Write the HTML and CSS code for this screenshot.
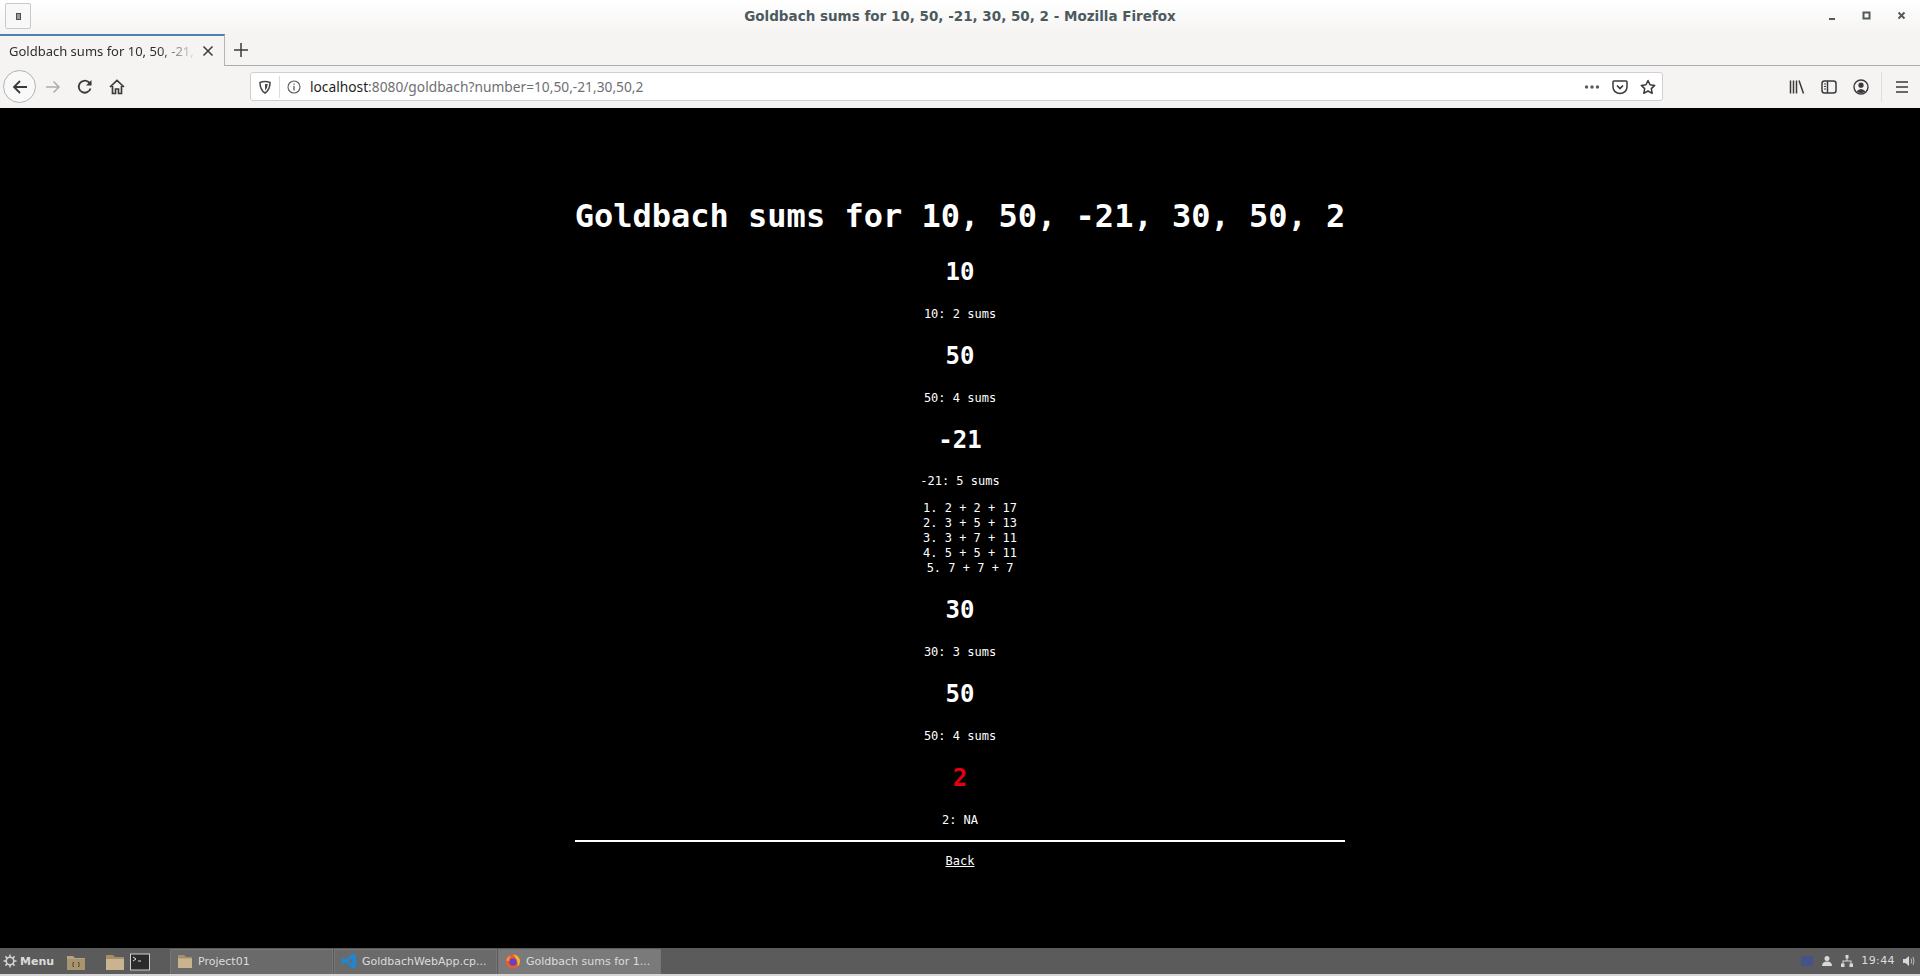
FILE: index.html
```html
<!DOCTYPE html>
<html lang="en">
  <head>
    <meta charset="UTF-8" />
    <title>Goldbach sums for 10, 50, -21, 30, 50, 2</title>
    <link rel="stylesheet" href="styles.css">
  </head>
  <body>
    <header class="titlebar">
      <div class="wm-menu"><span class="wm-menu-dot"></span></div>
      <div class="wm-title">Goldbach sums for 10, 50, -21, 30, 50, 2 - Mozilla Firefox</div>
      <div class="wm-controls">
        <svg width="12" height="12" viewBox="0 0 12 12"><rect x="3" y="8" width="6" height="2" fill="#555b5c"/></svg>
        <svg width="12" height="12" viewBox="0 0 12 12"><rect x="2.500" y="2.500" width="6" height="6" fill="none" stroke="#555b5c" stroke-width="2"/></svg>
        <svg width="12" height="12" viewBox="0 0 12 12"><path d="M2.500 2.500l6 6M8.500 2.500l-6 6" stroke="#555b5c" stroke-width="2"/></svg>
      </div>
    </header>

    <div class="tabstrip">
      <div class="tab">
        <span class="tab-label">Goldbach sums for 10, 50, -21,</span>
        <svg class="tab-close" width="12" height="12" viewBox="0 0 12 12"><path d="M1.500 1.500l9 9M10.500 1.500l-9 9" stroke="#3a3a3c" stroke-width="1.500"/></svg>
      </div>
      <svg class="tab-new" width="16" height="16" viewBox="0 0 16 16"><path d="M8 1v14M1 8h14" stroke="#3a3a3c" stroke-width="1.500"/></svg>
    </div>

    <nav class="toolbar">
      <div class="nav-btns">
        <span class="back-btn">
          <svg width="18" height="18" viewBox="0 0 18 18"><path d="M16 9H3M9 3L3 9l6 6" fill="none" stroke="#3a3a3c" stroke-width="1.800"/></svg>
        </span>
        <svg class="ico-forward" width="16" height="16" viewBox="0 0 16 16"><path d="M1 8h13M8.500 2.500L14 8l-5.500 5.500" fill="none" stroke="#adadad" stroke-width="1.500"/></svg>
        <svg class="ico-reload" width="16" height="16" viewBox="0 0 16 16"><path d="M13.500 9.500A6 6 0 1 1 11.500 3L14 5" fill="none" stroke="#3a3a3c" stroke-width="1.800"/><path d="M14.500 1v5.500H9z" fill="#3a3a3c"/></svg>
        <svg class="ico-home" width="16" height="16" viewBox="0 0 16 16"><path d="M1 8l7-6.500L15 8M3.500 7v7.500h3V10h3v4.500h3V7" fill="none" stroke="#3a3a3c" stroke-width="1.700"/></svg>
      </div>
      <div class="urlbar">
        <svg class="ico-shield" width="14" height="14" viewBox="0 0 14 14"><path d="M2 2.500Q7 .5 12 2.500 12 10 7 13 2 10 2 2.500z" fill="none" stroke="#4a4a4c" stroke-width="1.600"/><path d="M7 4v6.500Q9.500 8.500 9.800 4z" fill="#4a4a4c"/></svg>
        <span class="url-sep"></span>
        <svg class="ico-info" width="14" height="14" viewBox="0 0 14 14"><circle cx="7" cy="7" r="6" fill="none" stroke="#5b5b5f" stroke-width="1.100"/><path d="M7 6v4.500M7 3.500v1.200" stroke="#5b5b5f" stroke-width="1.300"/></svg>
        <span class="url-text">localhost<span class="url-dim">:8080/goldbach?number=10,50,-21,30,50,2</span></span>
        <span class="url-actions">
          <svg width="16" height="6" viewBox="0 0 16 6"><circle cx="2.500" cy="3" r="1.700" fill="#5b5b5f"/><circle cx="8" cy="3" r="1.700" fill="#5b5b5f"/><circle cx="13.500" cy="3" r="1.700" fill="#5b5b5f"/></svg>
          <svg width="16" height="16" viewBox="0 0 16 16"><path d="M2 2h12a1 1 0 0 1 1 1v5a7 6.500 0 0 1-14 0V3a1 1 0 0 1 1-1z" fill="none" stroke="#3a3a3c" stroke-width="1.500"/><path d="M5 6.500L8 9.500l3-3" fill="none" stroke="#3a3a3c" stroke-width="1.700"/></svg>
          <svg width="16" height="16" viewBox="0 0 16 16"><path d="M8 1.500l2 4.300 4.700.6-3.400 3.200.9 4.700L8 12l-4.200 2.300.9-4.700L1.300 6.400 6 5.800z" fill="none" stroke="#3a3a3c" stroke-width="1.500" stroke-linejoin="round"/></svg>
        </span>
      </div>
      <div class="tools">
        <svg width="16" height="16" viewBox="0 0 16 16"><path d="M1.500 1.500v13M4.500 1.500v13M7.500 1.500v13M10 1.500l4.500 13" fill="none" stroke="#3a3a3c" stroke-width="1.500"/></svg>
        <svg width="16" height="16" viewBox="0 0 16 16"><rect x="1" y="2" width="14" height="12" rx="2.500" fill="none" stroke="#3a3a3c" stroke-width="1.500"/><path d="M6.500 2v12" stroke="#3a3a3c" stroke-width="1.500"/><path d="M3 5h2M3 7.500h2M3 10h2" stroke="#3a3a3c"/></svg>
        <svg width="16" height="16" viewBox="0 0 16 16"><circle cx="8" cy="8" r="7" fill="none" stroke="#3a3a3c" stroke-width="1.400"/><circle cx="8" cy="6.200" r="2.600" fill="#3a3a3c"/><path d="M3.500 12.500Q8 7.500 12.500 12.500 8 15.500 3.500 12.500z" fill="#3a3a3c"/></svg>
        <span class="tool-sep"></span>
        <svg width="16" height="16" viewBox="0 0 16 16"><path d="M2 3h12M2 8h12M2 13h12" stroke="#3a3a3c" stroke-width="1.500"/></svg>
      </div>
    </nav>

    <main class="page">
      <div class="report">
        <h1>Goldbach sums for 10, 50, -21, 30, 50, 2</h1>
        <h2>10</h2>
        <p>10: 2 sums</p>
        <h2>50</h2>
        <p>50: 4 sums</p>
        <h2 class="tight">-21</h2>
        <p>-21: 5 sums</p>
        <ol>
          <li>2 + 2 + 17</li>
          <li>3 + 5 + 13</li>
          <li>3 + 7 + 11</li>
          <li>5 + 5 + 11</li>
          <li>7 + 7 + 7</li>
        </ol>
        <h2>30</h2>
        <p>30: 3 sums</p>
        <h2>50</h2>
        <p>50: 4 sums</p>
        <h2 class="err">2</h2>
        <p>2: NA</p>
        <hr />
        <a class="back" href="#">Back</a>
      </div>
    </main>

    <footer class="taskbar">
      <div class="start">
        <svg width="14" height="14" viewBox="0 0 14 14"><circle cx="7" cy="7" r="3.800" fill="none" stroke="#d4d4d4" stroke-width="1.600"/><path d="M7 .5v3M7 10.500v3M.5 7h3M10.500 7h3M2.400 2.400l2.100 2.100M9.500 9.500l2.100 2.100M2.400 11.600l2.100-2.100M9.500 4.500l2.100-2.100" stroke="#d4d4d4" stroke-width="1.500"/></svg>
        <span>Menu</span>
      </div>
      <div class="launchers">
        <svg width="20" height="18" viewBox="0 0 20 18"><path d="M1 3h6l2 2h10v12H1z" fill="#b5a27f"/><path d="M1 6h18v11H1z" fill="#a8946f"/><path d="M8 9.500h-1v4h1M12 9.500h1v4h-1" fill="none" stroke="#4f4634"/></svg>
        <svg class="ml" width="20" height="18" viewBox="0 0 20 18"><path d="M1 2h7l2 2h9v13H1z" fill="#a48f6a"/><path d="M1 6h18v11H1z" fill="#c9b48f"/></svg>
        <svg width="20" height="18" viewBox="0 0 20 18"><rect x=".5" y="1" width="19" height="16" fill="#2b2b2b" stroke="#cfcfcf"/><path d="M3 4l3 2-3 2M8 8h3" stroke="#e0e0e0" fill="none"/></svg>
      </div>
      <div class="task">
        <svg width="16" height="16" viewBox="0 0 16 16"><path d="M1 2h6l2 2h6v11H1z" fill="#a48f6a"/><path d="M1 5.500h14V15H1z" fill="#c9b48f"/></svg>
        <span>Project01</span>
      </div>
      <div class="task">
        <svg width="16" height="16" viewBox="0 0 16 16"><path d="M11.500.5L5 6.800 2 4.400.7 5.100v5.800L2 11.600l3-2.400 6.500 6.300 3.800-1.800V2.300zM11.500 4.800v6.400L7.300 8z" fill="#1f86d2" fill-rule="evenodd"/></svg>
        <span>GoldbachWebApp.cp...</span>
      </div>
      <div class="task task-active">
        <svg width="16" height="16" viewBox="0 0 16 16"><circle cx="8" cy="8.500" r="7" fill="#ee5a2a"/><path d="M8 1.500a7 7 0 0 1 7 7c0 2-1 4-2.500 5 .8-3-.5-8-4.500-12z" fill="#f7b32b"/><circle cx="8" cy="9" r="3.800" fill="#6a3fc4"/><path d="M1 7.500Q2.500 3 6 3 4 5 4.500 8z" fill="#f7923a"/></svg>
        <span>Goldbach sums for 1...</span>
      </div>
      <div class="tray">
        <span class="tray-flag"></span>
        <svg width="12" height="12" viewBox="0 0 12 12"><circle cx="6" cy="3.500" r="2.500" fill="#d8d8d8"/><path d="M1 11q0-4.500 5-4.500t5 4.500z" fill="#d8d8d8"/></svg>
        <svg width="12" height="12" viewBox="0 0 12 12"><path d="M4.500 0h3v3.500h-3zM0 8.500h3.500V12H0zM8.500 8.500H12V12H8.500zM5.500 3.500h1V5.500H10.500v3h-1v-2H2.500v2h-1v-3h4z" fill="#d8d8d8"/></svg>
        <span class="clock">19:44</span>
        <svg width="12" height="12" viewBox="0 0 12 12"><path d="M0 4h2.500L6 1v10L2.500 8H0z" fill="#d8d8d8"/><path d="M8 3.500q1.500 2.500 0 5M10 2q2 4 0 8" fill="none" stroke="#bdbdbd"/></svg>
      </div>
    </footer>
  </body>
</html>
```

FILE: styles.css
```css
* {
  box-sizing: border-box;
}

html,
body {
  height: 100%;
}

body {
  margin: 0;
  display: flex;
  flex-direction: column;
  overflow: hidden;
  background-color: #000;
  font-family: "Noto Sans", sans-serif;
}

svg {
  display: block;
  flex-shrink: 0;
}

/* window title */
.titlebar {
  height: 34px;
  display: flex;
  align-items: center;
  justify-content: center;
  position: relative;
  background: linear-gradient(#ffffff, #f5f4f2);
}

.wm-menu {
  position: absolute;
  left: 5px;
  top: 3px;
  width: 26px;
  height: 26px;
  border: 1px solid #c9c9c9;
  border-radius: 2px;
  background-color: #f8f8f8;
  display: flex;
  align-items: center;
  justify-content: center;
}

.wm-menu-dot {
  width: 5px;
  height: 7px;
  border: 1.500px solid #4a5052;
  background-color: #9a9a9a;
}

.wm-title {
  font-family: "DejaVu Sans", sans-serif;
  font-size: 13.500px;
  font-weight: 700;
  color: #4c5a60;
  margin-top: -2px;
}

.wm-controls {
  position: absolute;
  right: 12px;
  top: 10px;
  display: flex;
  gap: 23px;
}

/* tabs */
.tabstrip {
  height: 32px;
  display: flex;
  align-items: center;
  background-color: #f5f4f2;
  border-bottom: 1px solid #adadad;
}

.tab {
  width: 225px;
  height: 32px;
  display: flex;
  align-items: center;
  padding: 0 10px 0 9px;
  gap: 7px;
  background-color: #f5f4f2;
  border-top: 2px solid #4f7fb0;
  border-right: 1px solid #b5b5b5;
}

.tab-label {
  flex: 1;
  font-size: 13px;
  color: #2e2e30;
  white-space: nowrap;
  -webkit-mask-image: linear-gradient(to right, #000 80%, transparent 102%);
  mask-image: linear-gradient(to right, #000 80%, transparent 102%);
}

.tab-new {
  margin-left: 8px;
}

/* nav and url */
.toolbar {
  height: 42px;
  display: flex;
  align-items: center;
  background-color: #f5f4f2;
  padding-bottom: 1px;
}

.nav-btns {
  width: 250px;
  padding-left: 3px;
  display: flex;
  align-items: center;
}

.back-btn {
  width: 33px;
  height: 33px;
  border: 1px solid #b3b3b3;
  border-radius: 50%;
  background-color: #f9f9f9;
  display: flex;
  align-items: center;
  justify-content: center;
}

.ico-forward {
  margin-left: 9px;
}

.ico-reload {
  margin-left: 16px;
}

.ico-home {
  margin-left: 16px;
}

.urlbar {
  width: 1413px;
  height: 29px;
  display: flex;
  align-items: center;
  background-color: #fff;
  border: 1px solid #d0d0d0;
  border-radius: 3px;
  padding-left: 7px;
}

.url-sep {
  width: 1px;
  height: 22px;
  margin: 0 7px 0 7px;
  background-color: #dcdcdc;
}

.url-text {
  margin-left: 9px;
  flex: 1;
  font-size: 13.750px;
  color: #1f1f21;
}

.url-dim {
  color: #6f6f73;
}

.url-actions {
  display: flex;
  align-items: center;
  gap: 12px;
  padding-right: 6px;
}

.tools {
  flex: 1;
  display: flex;
  align-items: center;
  justify-content: flex-end;
  gap: 16px;
  padding-right: 10px;
}

.tool-sep {
  width: 1px;
  height: 30px;
  margin: 0 -4px;
  background-color: #dedede;
}

/* report */
.page {
  flex: 1;
  background-color: #000;
  display: flex;
  justify-content: center;
  padding-top: 69px;
}

.report {
  width: fit-content;
  text-align: center;
  color: #fff;
  font-family: "DejaVu Sans Mono", monospace;
}

h1 {
  margin: 21px 0 0;
  font-size: 32px;
  line-height: 37px;
  white-space: nowrap;
}

h2 {
  margin: 20px 0;
  font-size: 24px;
  line-height: 29px;
}

h1 + h2 {
  margin-top: 23px;
}

.tight {
  margin-bottom: 19px;
}

.err {
  color: #e3000f;
}

p {
  margin: 12px 0;
  font-size: 12px;
  line-height: 15px;
}

ol {
  margin: 12px 0;
  padding: 0 0 0 20px;
  font-size: 12px;
  line-height: 15px;
  list-style-position: inside;
}

hr {
  margin: 12px 0 8px;
  height: 2px;
  border: none;
  background-color: #fff;
}

.back {
  font-size: 12px;
  line-height: 15px;
  color: #fff;
}

/* desktop panel */
.taskbar {
  height: 28px;
  display: flex;
  align-items: stretch;
  background-color: #5b5b5b;
  padding-top: 1px;
  border-bottom: 2px solid #d6d6d6;
  font-family: "DejaVu Sans", sans-serif;
  font-size: 11px;
  color: #dcdcdc;
}

.start {
  width: 62px;
  display: flex;
  align-items: center;
  gap: 3px;
  padding: 0 0 1px 3px;
  font-weight: 700;
}

.launchers {
  width: 108px;
  display: flex;
  align-items: center;
  gap: 5px;
  padding-left: 4px;
}

.launchers .ml {
  margin-left: 14px;
}

.task {
  width: 163px;
  margin-right: 1px;
  display: flex;
  align-items: center;
  gap: 5px;
  padding: 0 0 2px 6px;
  background-color: #6a6a6a;
  border: 1px solid #767676;
  border-bottom: none;
  white-space: nowrap;
}

.task-active {
  background-color: #7a7a7a;
}

.tray {
  flex: 1;
  display: flex;
  align-items: center;
  justify-content: flex-end;
  gap: 8px;
  padding: 0 5px 2px 0;
}

.tray-flag {
  width: 12px;
  height: 10px;
  background-color: #46538a;
}

.clock {
  letter-spacing: .4px;
}
```
